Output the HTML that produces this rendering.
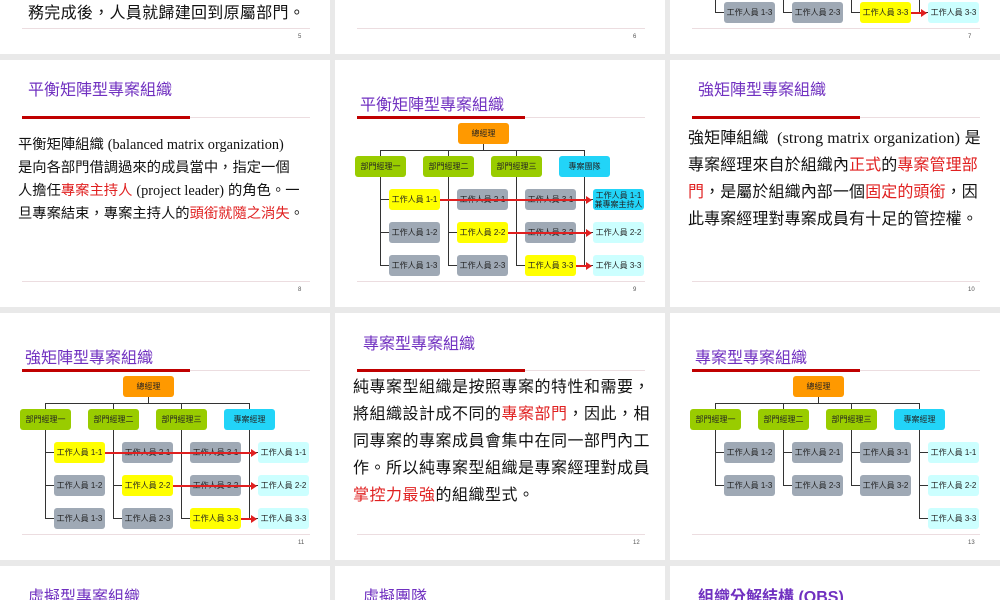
<!DOCTYPE html>
<html><head><meta charset="utf-8">
<style>
*{margin:0;padding:0;box-sizing:border-box}
html,body{width:1000px;height:600px;overflow:hidden}
body{background:#e9e9e9;position:relative;font-family:"Liberation Sans","Noto Sans CJK TC",sans-serif}
#root{position:absolute;left:0;top:0;width:1000px;height:600px;overflow:hidden}
.s{position:absolute;width:330px;height:247px;background:#fff;overflow:hidden}
.t{position:absolute;left:28px;font-size:16px;color:#7030c0;white-space:nowrap}
.rb{position:absolute;left:22px;width:168px;height:3px;background:#c00000;top:56px}
.gl{position:absolute;left:22px;width:288px;height:1px;background:#ecdde0;top:57px}
.bl{position:absolute;left:22px;width:288px;height:1px;background:#ecdde0;top:221px}
.pn{position:absolute;left:298px;top:227px;font-size:6px;color:#555}
.tx{position:absolute;left:18px;color:#111;white-space:nowrap}
.r{color:#e02020}
.se{font-family:"Liberation Serif","Noto Serif CJK SC",serif}
.b{position:absolute;width:51px;height:21px;border-radius:3px;font-size:8px;line-height:21px;text-align:center;color:#222;white-space:nowrap;font-family:"Liberation Sans","Noto Sans CJK TC",sans-serif}
.ln{position:absolute;background:#333}
.ra{position:absolute;height:2px;background:#e02020}
.ra:after{content:"";position:absolute;right:-1px;top:-3px;border-left:6px solid #e02020;border-top:4px solid transparent;border-bottom:4px solid transparent}
</style></head><body>
<div id="root"></div>
<script>
const X=[0,335,670],Y=[-193,60,313,566];
let h='';
function slide(c,r,inner,num){const hh=r==3?34:247;h+=`<div class="s" style="left:${X[c]}px;top:${Y[r]}px;height:${hh}px">${inner}<div class="bl"></div><div class="pn">${num}</div></div>`;}
const col={g:'#9fa9b5',y:'#ffff00',c:'#ccffff',C:'#22d4f8',G:'#99cc00',o:'#ff9900'};
function box(x,y,t,c,extra){return `<div class="b" style="left:${x}px;top:${y}px;background:${col[c]};${extra||''}">${t}</div>`;}
function L(x,y,w,hh){return `<div class="ln" style="left:${x}px;top:${y}px;width:${w}px;height:${hh}px"></div>`;}
function chart(depts,workers,arrows){
 let s='';
 const dx=[20,88,156,224],wx=[54,122,190,258],wy=[129,162,195];
 s+=L(148,84,1,6)+L(45,90,205,1);
 dx.forEach(x=>s+=L(x+25,90,1,6));
 s+=box(123,63,'總經理','o');
 depts.forEach((d,i)=>s+=box(dx[i],96,d,i==3?'C':'G'));
 for(let i=0;i<4;i++){
  const vx=dx[i]+25;const rows=workers[i].map((w,j)=>w?j:-1).filter(j=>j>=0);
  const maxr=Math.max(...rows);
  s+=L(vx,117,1,wy[maxr]+11-117);
  rows.forEach(j=>s+=L(vx,wy[j]+10,wx[i]-vx,1));
 }
 for(let i=0;i<4;i++)workers[i].forEach((w,j)=>{if(w){
  let ex=w[2]?'line-height:9px;padding-top:2px;':'';
  s+=box(wx[i],wy[j],w[0],w[1],ex);}});
 arrows.forEach(a=>s+=`<div class="ra" style="left:${a[0]}px;top:${wy[a[1]]+10}px;width:${258-a[0]-2}px"></div>`);
 return s;
}
const W=n=>'工作人員 '+n;
const std=[[[W('1-1'),'y'],[W('1-2'),'g'],[W('1-3'),'g']],
 [[W('2-1'),'g'],[W('2-2'),'y'],[W('2-3'),'g']],
 [[W('3-1'),'g'],[W('3-2'),'g'],[W('3-3'),'y']],
 [[W('1-1'),'c'],[W('2-2'),'c'],[W('3-3'),'c']]];
const arr=[[105,0],[173,1],[241,2]];
slide(0,0,`<div class="tx" style="left:28px;top:192px;font-size:16px;letter-spacing:0.3px">務完成後，人員就歸建回到原屬部門。</div>`,5);
slide(1,0,'',6);
slide(2,0,chart(['部門經理一','部門經理二','部門經理三','專案團隊'],std,arr),7);
slide(0,1,`<div class="t" style="top:16px">平衡矩陣型專案組織</div><div class="gl"></div><div class="rb"></div>
<div class="tx" style="top:74px;font-size:14.3px;line-height:23px">平衡矩陣組織 <span class="se">(balanced matrix organization)</span><br>是向各部門借調過來的成員當中，指定一個<br>人擔任<span class="r">專案主持人</span> <span class="se">(project leader)</span> 的角色。一<br>旦專案結束，專案主持人的<span class="r">頭銜就隨之消失</span>。</div>`,8);
const s9=JSON.parse(JSON.stringify(std));s9[3][0]=['工作人員 1-1<br>兼專案主持人','C',1];
slide(1,1,`<div class="t" style="left:25px;top:31px">平衡矩陣型專案組織</div><div class="gl"></div><div class="rb"></div>`+chart(['部門經理一','部門經理二','部門經理三','專案團隊'],s9,arr),9);
slide(2,1,`<div class="t" style="top:16px">強矩陣型專案組織</div><div class="gl"></div><div class="rb"></div>
<div class="tx" style="top:65px;font-size:16px;line-height:27px;letter-spacing:0.1px">強矩陣組織 <span class="se">&nbsp;(strong matrix organization)</span> 是<br>專案經理來自於組織內<span class="r">正式</span>的<span class="r">專案管理部</span><br><span class="r">門</span>，是屬於組織內部一個<span class="r">固定的頭銜</span>，因<br>此專案經理對專案成員有十足的管控權。</div>`,10);
slide(0,2,`<div class="t" style="left:25px;top:31px">強矩陣型專案組織</div><div class="gl"></div><div class="rb"></div>`+chart(['部門經理一','部門經理二','部門經理三','專案經理'],std,arr),11);
slide(1,2,`<div class="t" style="top:17px">專案型專案組織</div><div class="gl"></div><div class="rb"></div>
<div class="tx" style="top:61px;font-size:16px;line-height:27px;letter-spacing:0.5px">純專案型組織是按照專案的特性和需要，<br>將組織設計成不同的<span class="r">專案部門</span>，因此，相<br>同專案的專案成員會集中在同一部門內工<br>作。所以純專案型組織是專案經理對成員<br><span class="r">掌控力最強</span>的組織型式。</div>`,12);
const s13b=[[[W('1-2'),'g'],[W('1-3'),'g'],null],[[W('2-1'),'g'],[W('2-3'),'g'],null],[[W('3-1'),'g'],[W('3-2'),'g'],null],std[3]];
slide(2,2,`<div class="t" style="left:25px;top:31px">專案型專案組織</div><div class="gl"></div><div class="rb"></div>`+chart(['部門經理一','部門經理二','部門經理三','專案經理'],s13b,[]),13);
slide(0,3,`<div class="t" style="top:17px">虛擬型專案組織</div>`,14);
slide(1,3,`<div class="t" style="top:17px">虛擬團隊</div>`,15);
slide(2,3,`<div class="t" style="top:17px;font-weight:bold">組織分解結構 (OBS)</div>`,16);
document.getElementById('root').innerHTML=h;
</script>
</body></html>
